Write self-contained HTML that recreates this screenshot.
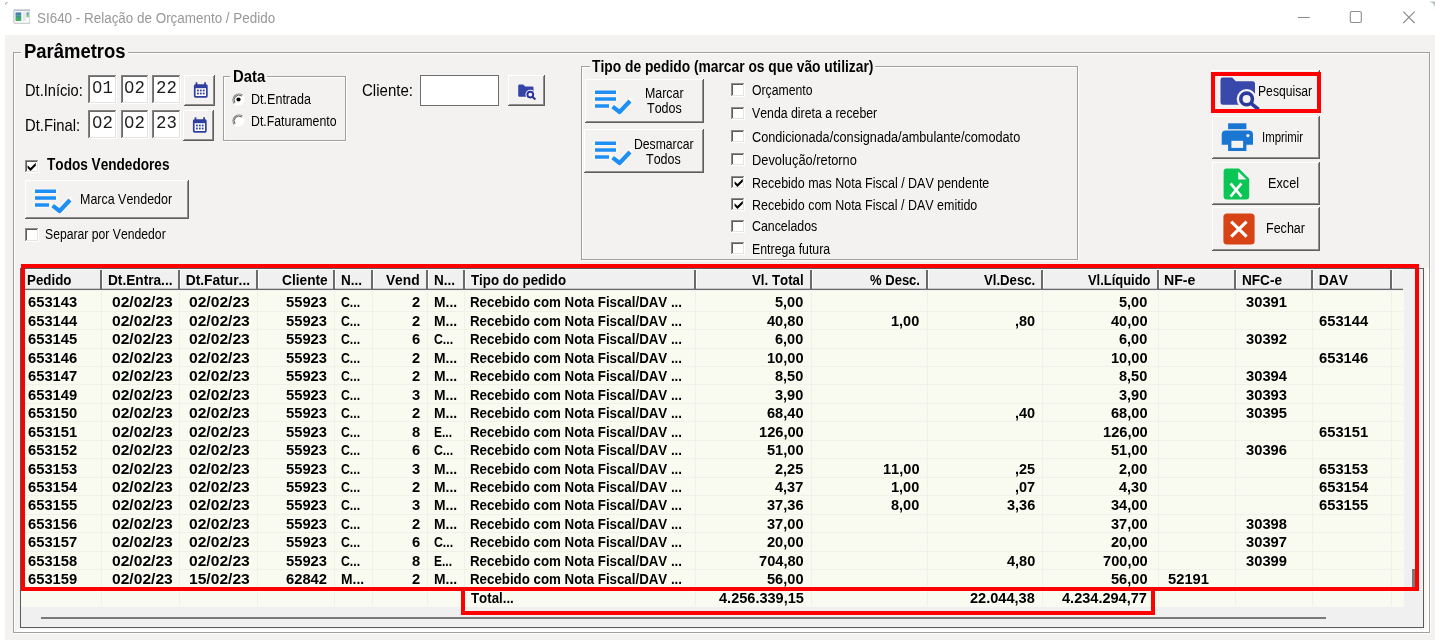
<!DOCTYPE html>
<html><head><meta charset="utf-8"><title>SI640</title>
<style>
html,body{margin:0;padding:0;background:#fff;}
body{width:1435px;height:640px;position:relative;overflow:hidden;font-family:"Liberation Sans",sans-serif;}
#r div,#r svg{position:absolute;}
#r{position:absolute;left:0;top:0;width:1435px;height:640px;overflow:hidden;will-change:transform;}
.t{white-space:pre;line-height:1;font-kerning:none;transform-origin:0 0;}
.b{font-weight:bold;}
.m{font-family:"Liberation Mono",monospace;}
</style></head><body><div id="r">
<div style="left:5.00px;top:35.00px;width:1430.00px;height:605.00px;background:#f3f2f1;"></div>
<svg style="left:12.7px;top:8.9px" width="17.8" height="15" viewBox="0 0 19 16" preserveAspectRatio="none"><rect x="0.9" y="1" width="17.2" height="14.2" rx="1" fill="#fcfcfd" stroke="#bcc1c9" stroke-width="1.1"/><rect x="0.9" y="0.8" width="17.2" height="1.4" fill="#bcc1c9"/><rect x="2.7" y="3.6" width="6.1" height="3.2" fill="#4683b0"/><rect x="2.7" y="6.6" width="6.1" height="3.2" fill="#3d9a88"/><rect x="2.7" y="9.6" width="6.1" height="3.2" fill="#43ad62"/><rect x="10.6" y="3.6" width="3" height="9.2" fill="#e6e6e6"/><rect x="14.4" y="3.5" width="2.5" height="2.8" fill="#6f98c6"/><rect x="14.4" y="6.2" width="2.5" height="2.7" fill="#7cc97e"/></svg>
<svg style="left:5px;top:2px" width="4" height="4" viewBox="0 0 4 4"><path d="M0.3 2.6Q0.4 0.5 2.6 0.3" stroke="#9a9a9a" stroke-width="0.9" fill="none"/></svg>
<svg style="left:1290px;top:5px" width="135" height="26" viewBox="0 0 135 26" fill="none" stroke="#8c8c8c" stroke-width="1.1"><path d="M8 12.5H19.8"/><rect x="60.3" y="6.5" width="11" height="11" rx="1.6"/><path d="M113.3 6.7L124.6 18M124.6 6.7L113.3 18"/></svg>
<svg style="left:1430px;top:1px" width="5" height="8" viewBox="0 0 5 8"><path d="M0 0.4H5V8C5 4 3.4 1.6 0 1Z" fill="#8a8f96" opacity="0.6"/></svg>
<div style="left:13.00px;top:52.00px;width:8.00px;height:1.00px;background:#a0a0a0;"></div>
<div style="left:127.50px;top:52.00px;width:1302.50px;height:1.00px;background:#a0a0a0;"></div>
<div style="left:13.00px;top:52.00px;width:1.00px;height:581.00px;background:#a0a0a0;"></div>
<div style="left:1429.00px;top:52.00px;width:1.00px;height:581.00px;background:#a0a0a0;"></div>
<div style="left:13.00px;top:632.00px;width:1417.00px;height:1.00px;background:#a0a0a0;"></div>
<div style="left:14.00px;top:53.00px;width:7.00px;height:1.00px;background:#ffffff;"></div>
<div style="left:127.50px;top:53.00px;width:1300.50px;height:1.00px;background:#ffffff;"></div>
<div style="left:14.00px;top:53.00px;width:1.00px;height:578.00px;background:#ffffff;"></div>
<div style="left:1430.00px;top:52.00px;width:1.00px;height:582.00px;background:#ffffff;"></div>
<div style="left:13.00px;top:633.00px;width:1417.00px;height:1.00px;background:#ffffff;"></div>
<div style="left:88.20px;top:75.00px;width:28.70px;height:29.30px;background:#ffffff;"></div>
<div style="left:88.20px;top:75.00px;width:28.70px;height:2.00px;background:#808080;"></div>
<div style="left:88.20px;top:75.00px;width:2.00px;height:29.30px;background:#808080;"></div>
<div style="left:89.20px;top:76.00px;width:26.70px;height:1.00px;background:#696969;"></div>
<div style="left:89.20px;top:76.00px;width:1.00px;height:27.30px;background:#696969;"></div>
<div style="left:115.90px;top:75.00px;width:1.00px;height:29.30px;background:#ffffff;"></div>
<div style="left:88.20px;top:103.30px;width:28.70px;height:1.00px;background:#ffffff;"></div>
<div style="left:114.90px;top:76.00px;width:1.00px;height:27.30px;background:#e3e3e3;"></div>
<div style="left:89.20px;top:102.30px;width:26.70px;height:1.00px;background:#e3e3e3;"></div>
<div style="left:120.60px;top:75.00px;width:28.70px;height:29.30px;background:#ffffff;"></div>
<div style="left:120.60px;top:75.00px;width:28.70px;height:2.00px;background:#808080;"></div>
<div style="left:120.60px;top:75.00px;width:2.00px;height:29.30px;background:#808080;"></div>
<div style="left:121.60px;top:76.00px;width:26.70px;height:1.00px;background:#696969;"></div>
<div style="left:121.60px;top:76.00px;width:1.00px;height:27.30px;background:#696969;"></div>
<div style="left:148.30px;top:75.00px;width:1.00px;height:29.30px;background:#ffffff;"></div>
<div style="left:120.60px;top:103.30px;width:28.70px;height:1.00px;background:#ffffff;"></div>
<div style="left:147.30px;top:76.00px;width:1.00px;height:27.30px;background:#e3e3e3;"></div>
<div style="left:121.60px;top:102.30px;width:26.70px;height:1.00px;background:#e3e3e3;"></div>
<div style="left:152.10px;top:75.00px;width:28.70px;height:29.30px;background:#ffffff;"></div>
<div style="left:152.10px;top:75.00px;width:28.70px;height:2.00px;background:#808080;"></div>
<div style="left:152.10px;top:75.00px;width:2.00px;height:29.30px;background:#808080;"></div>
<div style="left:153.10px;top:76.00px;width:26.70px;height:1.00px;background:#696969;"></div>
<div style="left:153.10px;top:76.00px;width:1.00px;height:27.30px;background:#696969;"></div>
<div style="left:179.80px;top:75.00px;width:1.00px;height:29.30px;background:#ffffff;"></div>
<div style="left:152.10px;top:103.30px;width:28.70px;height:1.00px;background:#ffffff;"></div>
<div style="left:178.80px;top:76.00px;width:1.00px;height:27.30px;background:#e3e3e3;"></div>
<div style="left:153.10px;top:102.30px;width:26.70px;height:1.00px;background:#e3e3e3;"></div>
<div style="left:88.20px;top:109.80px;width:28.70px;height:29.30px;background:#ffffff;"></div>
<div style="left:88.20px;top:109.80px;width:28.70px;height:2.00px;background:#808080;"></div>
<div style="left:88.20px;top:109.80px;width:2.00px;height:29.30px;background:#808080;"></div>
<div style="left:89.20px;top:110.80px;width:26.70px;height:1.00px;background:#696969;"></div>
<div style="left:89.20px;top:110.80px;width:1.00px;height:27.30px;background:#696969;"></div>
<div style="left:115.90px;top:109.80px;width:1.00px;height:29.30px;background:#ffffff;"></div>
<div style="left:88.20px;top:138.10px;width:28.70px;height:1.00px;background:#ffffff;"></div>
<div style="left:114.90px;top:110.80px;width:1.00px;height:27.30px;background:#e3e3e3;"></div>
<div style="left:89.20px;top:137.10px;width:26.70px;height:1.00px;background:#e3e3e3;"></div>
<div style="left:120.60px;top:109.80px;width:28.70px;height:29.30px;background:#ffffff;"></div>
<div style="left:120.60px;top:109.80px;width:28.70px;height:2.00px;background:#808080;"></div>
<div style="left:120.60px;top:109.80px;width:2.00px;height:29.30px;background:#808080;"></div>
<div style="left:121.60px;top:110.80px;width:26.70px;height:1.00px;background:#696969;"></div>
<div style="left:121.60px;top:110.80px;width:1.00px;height:27.30px;background:#696969;"></div>
<div style="left:148.30px;top:109.80px;width:1.00px;height:29.30px;background:#ffffff;"></div>
<div style="left:120.60px;top:138.10px;width:28.70px;height:1.00px;background:#ffffff;"></div>
<div style="left:147.30px;top:110.80px;width:1.00px;height:27.30px;background:#e3e3e3;"></div>
<div style="left:121.60px;top:137.10px;width:26.70px;height:1.00px;background:#e3e3e3;"></div>
<div style="left:152.10px;top:109.80px;width:28.70px;height:29.30px;background:#ffffff;"></div>
<div style="left:152.10px;top:109.80px;width:28.70px;height:2.00px;background:#808080;"></div>
<div style="left:152.10px;top:109.80px;width:2.00px;height:29.30px;background:#808080;"></div>
<div style="left:153.10px;top:110.80px;width:26.70px;height:1.00px;background:#696969;"></div>
<div style="left:153.10px;top:110.80px;width:1.00px;height:27.30px;background:#696969;"></div>
<div style="left:179.80px;top:109.80px;width:1.00px;height:29.30px;background:#ffffff;"></div>
<div style="left:152.10px;top:138.10px;width:28.70px;height:1.00px;background:#ffffff;"></div>
<div style="left:178.80px;top:110.80px;width:1.00px;height:27.30px;background:#e3e3e3;"></div>
<div style="left:153.10px;top:137.10px;width:26.70px;height:1.00px;background:#e3e3e3;"></div>
<div style="left:184.20px;top:75.00px;width:31.00px;height:31.20px;background:#f3f2f1;"></div>
<div style="left:184.20px;top:75.00px;width:30.00px;height:1.00px;background:#ffffff;"></div>
<div style="left:184.20px;top:75.00px;width:1.00px;height:30.20px;background:#ffffff;"></div>
<div style="left:213.20px;top:76.00px;width:1.00px;height:29.20px;background:#8e8e8e;"></div>
<div style="left:185.20px;top:104.20px;width:29.00px;height:1.00px;background:#8e8e8e;"></div>
<div style="left:214.20px;top:75.00px;width:1.00px;height:31.20px;background:#5e5e5e;"></div>
<div style="left:184.20px;top:105.20px;width:31.00px;height:1.00px;background:#5e5e5e;"></div>
<svg style="left:192.80px;top:82.00px" width="16" height="17" viewBox="0 0 16 17"><rect x="2.6" y="0.3" width="1.8" height="3" fill="#303f9f"/><rect x="11.2" y="0.3" width="1.8" height="3" fill="#303f9f"/><rect x="0.9" y="2.3" width="13.8" height="13.4" rx="1.6" fill="#303f9f"/><rect x="2.6" y="6.2" width="10.4" height="7.8" fill="#fff"/><g fill="#303f9f"><rect x="4" y="7.6" width="1.8" height="1.8"/><rect x="6.9" y="7.6" width="1.8" height="1.8"/><rect x="9.8" y="7.6" width="1.8" height="1.8"/><rect x="4" y="10.6" width="1.8" height="1.8"/><rect x="6.9" y="10.6" width="1.8" height="1.8"/><rect x="9.8" y="10.6" width="1.8" height="1.8"/></g></svg>
<div style="left:183.40px;top:109.80px;width:31.00px;height:31.40px;background:#f3f2f1;"></div>
<div style="left:183.40px;top:109.80px;width:30.00px;height:1.00px;background:#ffffff;"></div>
<div style="left:183.40px;top:109.80px;width:1.00px;height:30.40px;background:#ffffff;"></div>
<div style="left:212.40px;top:110.80px;width:1.00px;height:29.40px;background:#8e8e8e;"></div>
<div style="left:184.40px;top:139.20px;width:29.00px;height:1.00px;background:#8e8e8e;"></div>
<div style="left:213.40px;top:109.80px;width:1.00px;height:31.40px;background:#5e5e5e;"></div>
<div style="left:183.40px;top:140.20px;width:31.00px;height:1.00px;background:#5e5e5e;"></div>
<svg style="left:192.00px;top:116.90px" width="16" height="17" viewBox="0 0 16 17"><rect x="2.6" y="0.3" width="1.8" height="3" fill="#303f9f"/><rect x="11.2" y="0.3" width="1.8" height="3" fill="#303f9f"/><rect x="0.9" y="2.3" width="13.8" height="13.4" rx="1.6" fill="#303f9f"/><rect x="2.6" y="6.2" width="10.4" height="7.8" fill="#fff"/><g fill="#303f9f"><rect x="4" y="7.6" width="1.8" height="1.8"/><rect x="6.9" y="7.6" width="1.8" height="1.8"/><rect x="9.8" y="7.6" width="1.8" height="1.8"/><rect x="4" y="10.6" width="1.8" height="1.8"/><rect x="6.9" y="10.6" width="1.8" height="1.8"/><rect x="9.8" y="10.6" width="1.8" height="1.8"/></g></svg>
<div style="left:222.60px;top:76.10px;width:7.90px;height:1.00px;background:#a0a0a0;"></div>
<div style="left:267.00px;top:76.10px;width:78.80px;height:1.00px;background:#a0a0a0;"></div>
<div style="left:222.60px;top:76.10px;width:1.00px;height:64.80px;background:#a0a0a0;"></div>
<div style="left:344.80px;top:76.10px;width:1.00px;height:64.80px;background:#a0a0a0;"></div>
<div style="left:222.60px;top:139.90px;width:123.20px;height:1.00px;background:#a0a0a0;"></div>
<div style="left:223.60px;top:77.10px;width:6.90px;height:1.00px;background:#ffffff;"></div>
<div style="left:267.00px;top:77.10px;width:76.80px;height:1.00px;background:#ffffff;"></div>
<div style="left:223.60px;top:77.10px;width:1.00px;height:61.80px;background:#ffffff;"></div>
<div style="left:345.80px;top:76.10px;width:1.00px;height:65.80px;background:#ffffff;"></div>
<div style="left:222.60px;top:140.90px;width:123.20px;height:1.00px;background:#ffffff;"></div>
<svg style="left:231.70px;top:92.50px" width="13" height="13" viewBox="0 0 13 13"><circle cx="6.5" cy="6.5" r="5.6" fill="#fff"/><path d="M2.2 10.6A6 6 0 0 1 10.6 2.2" fill="none" stroke="#808080" stroke-width="1.1"/><path d="M3 9.8A4.9 4.9 0 0 1 9.8 3" fill="none" stroke="#555" stroke-width="1"/><path d="M10.8 2.4A6 6 0 0 1 2.4 10.8" fill="none" stroke="#fff" stroke-width="1.1"/><circle cx="6.5" cy="6.5" r="2.1" fill="#000"/></svg>
<svg style="left:231.70px;top:114.00px" width="13" height="13" viewBox="0 0 13 13"><circle cx="6.5" cy="6.5" r="5.6" fill="#fff"/><path d="M2.2 10.6A6 6 0 0 1 10.6 2.2" fill="none" stroke="#808080" stroke-width="1.1"/><path d="M3 9.8A4.9 4.9 0 0 1 9.8 3" fill="none" stroke="#555" stroke-width="1"/><path d="M10.8 2.4A6 6 0 0 1 2.4 10.8" fill="none" stroke="#fff" stroke-width="1.1"/></svg>
<div style="left:419.80px;top:75.00px;width:79.40px;height:31.00px;background:#6e6e6e;"></div>
<div style="left:420.90px;top:76.10px;width:77.20px;height:28.80px;background:#ffffff;"></div>
<div style="left:507.60px;top:75.00px;width:37.30px;height:31.00px;background:#f3f2f1;"></div>
<div style="left:507.60px;top:75.00px;width:36.30px;height:1.00px;background:#ffffff;"></div>
<div style="left:507.60px;top:75.00px;width:1.00px;height:30.00px;background:#ffffff;"></div>
<div style="left:542.90px;top:76.00px;width:1.00px;height:29.00px;background:#8e8e8e;"></div>
<div style="left:508.60px;top:104.00px;width:35.30px;height:1.00px;background:#8e8e8e;"></div>
<div style="left:543.90px;top:75.00px;width:1.00px;height:31.00px;background:#5e5e5e;"></div>
<div style="left:507.60px;top:105.00px;width:37.30px;height:1.00px;background:#5e5e5e;"></div>
<svg style="left:517px;top:84px" width="20" height="17" viewBox="0 0 20 17"><path d="M1.2 1.9Q1.2 0.6 2.5 0.6H6.3L8.1 2.4H15.2Q16.5 2.4 16.5 3.7V11.4Q16.5 12.7 15.2 12.7H2.5Q1.2 12.7 1.2 11.4Z" fill="#3443a8"/><circle cx="13.3" cy="10.6" r="4.9" fill="#f3f2f1"/><circle cx="13.3" cy="10.6" r="2.9" fill="none" stroke="#26349a" stroke-width="1.9"/><path d="M15.4 12.7L18.4 15.5" stroke="#26349a" stroke-width="2"/></svg>
<div style="left:25.00px;top:159.60px;width:13.60px;height:13.60px;background:#ffffff;"></div>
<div style="left:25.00px;top:159.60px;width:13.60px;height:1.00px;background:#8c8c8c;"></div>
<div style="left:25.00px;top:159.60px;width:1.00px;height:13.60px;background:#8c8c8c;"></div>
<div style="left:26.00px;top:160.60px;width:11.60px;height:1.00px;background:#5c5c5c;"></div>
<div style="left:26.00px;top:160.60px;width:1.00px;height:11.60px;background:#5c5c5c;"></div>
<div style="left:37.60px;top:159.60px;width:1.00px;height:13.60px;background:#ffffff;"></div>
<div style="left:25.00px;top:172.20px;width:13.60px;height:1.00px;background:#ffffff;"></div>
<div style="left:36.60px;top:160.60px;width:1.00px;height:11.60px;background:#e3e3e3;"></div>
<div style="left:26.00px;top:171.20px;width:11.60px;height:1.00px;background:#e3e3e3;"></div>
<svg style="left:27.40px;top:161.90px" width="9.6" height="9.8" viewBox="0 0 8 8"><path d="M0.5 2.6L2.9 5L7.3 0.6V3L2.9 7.4L0.5 5Z" fill="#000"/></svg>
<div style="left:25.00px;top:180.00px;width:163.80px;height:39.20px;background:#f3f2f1;"></div>
<div style="left:25.00px;top:180.00px;width:162.80px;height:1.00px;background:#ffffff;"></div>
<div style="left:25.00px;top:180.00px;width:1.00px;height:38.20px;background:#ffffff;"></div>
<div style="left:186.80px;top:181.00px;width:1.00px;height:37.20px;background:#8e8e8e;"></div>
<div style="left:26.00px;top:217.20px;width:161.80px;height:1.00px;background:#8e8e8e;"></div>
<div style="left:187.80px;top:180.00px;width:1.00px;height:39.20px;background:#5e5e5e;"></div>
<div style="left:25.00px;top:218.20px;width:163.80px;height:1.00px;background:#5e5e5e;"></div>
<svg style="left:32.00px;top:186.20px" width="44" height="31" viewBox="-3 -3 44 31"><g fill="none" stroke="#fdf7ee" stroke-linecap="round" stroke-linejoin="round"><path d="M0 2.2H21M0 9H21M0 16H14" stroke-width="5.4"/><path d="M17.6 16.6L24.6 22L35 11" stroke-width="6"/></g><g fill="none" stroke="#1e90f5"><path d="M0 2.2H21M0 9H21M0 16H14" stroke-width="3.6"/><path d="M17.6 16.6L24.6 22L35 11" stroke-width="4.2" stroke-linejoin="round"/></g></svg>
<div style="left:25.00px;top:228.00px;width:13.60px;height:13.60px;background:#ffffff;"></div>
<div style="left:25.00px;top:228.00px;width:13.60px;height:1.00px;background:#8c8c8c;"></div>
<div style="left:25.00px;top:228.00px;width:1.00px;height:13.60px;background:#8c8c8c;"></div>
<div style="left:26.00px;top:229.00px;width:11.60px;height:1.00px;background:#5c5c5c;"></div>
<div style="left:26.00px;top:229.00px;width:1.00px;height:11.60px;background:#5c5c5c;"></div>
<div style="left:37.60px;top:228.00px;width:1.00px;height:13.60px;background:#ffffff;"></div>
<div style="left:25.00px;top:240.60px;width:13.60px;height:1.00px;background:#ffffff;"></div>
<div style="left:36.60px;top:229.00px;width:1.00px;height:11.60px;background:#e3e3e3;"></div>
<div style="left:26.00px;top:239.60px;width:11.60px;height:1.00px;background:#e3e3e3;"></div>
<div style="left:581.00px;top:66.00px;width:9.00px;height:1.00px;background:#a0a0a0;"></div>
<div style="left:875.00px;top:66.00px;width:203.00px;height:1.00px;background:#a0a0a0;"></div>
<div style="left:581.00px;top:66.00px;width:1.00px;height:194.40px;background:#a0a0a0;"></div>
<div style="left:1077.00px;top:66.00px;width:1.00px;height:194.40px;background:#a0a0a0;"></div>
<div style="left:581.00px;top:259.40px;width:497.00px;height:1.00px;background:#a0a0a0;"></div>
<div style="left:582.00px;top:67.00px;width:8.00px;height:1.00px;background:#ffffff;"></div>
<div style="left:875.00px;top:67.00px;width:201.00px;height:1.00px;background:#ffffff;"></div>
<div style="left:582.00px;top:67.00px;width:1.00px;height:191.40px;background:#ffffff;"></div>
<div style="left:1078.00px;top:66.00px;width:1.00px;height:195.40px;background:#ffffff;"></div>
<div style="left:581.00px;top:260.40px;width:497.00px;height:1.00px;background:#ffffff;"></div>
<div style="left:584.60px;top:78.70px;width:119.00px;height:43.90px;background:#f3f2f1;"></div>
<div style="left:584.60px;top:78.70px;width:118.00px;height:1.00px;background:#ffffff;"></div>
<div style="left:584.60px;top:78.70px;width:1.00px;height:42.90px;background:#ffffff;"></div>
<div style="left:701.60px;top:79.70px;width:1.00px;height:41.90px;background:#8e8e8e;"></div>
<div style="left:585.60px;top:120.60px;width:117.00px;height:1.00px;background:#8e8e8e;"></div>
<div style="left:702.60px;top:78.70px;width:1.00px;height:43.90px;background:#5e5e5e;"></div>
<div style="left:584.60px;top:121.60px;width:119.00px;height:1.00px;background:#5e5e5e;"></div>
<svg style="left:591.60px;top:87.40px" width="44" height="31" viewBox="-3 -3 44 31"><g fill="none" stroke="#fdf7ee" stroke-linecap="round" stroke-linejoin="round"><path d="M0 2.2H21M0 9H21M0 16H14" stroke-width="5.4"/><path d="M17.6 16.6L24.6 22L35 11" stroke-width="6"/></g><g fill="none" stroke="#1e90f5"><path d="M0 2.2H21M0 9H21M0 16H14" stroke-width="3.6"/><path d="M17.6 16.6L24.6 22L35 11" stroke-width="4.2" stroke-linejoin="round"/></g></svg>
<div style="left:584.40px;top:129.40px;width:119.20px;height:43.90px;background:#f3f2f1;"></div>
<div style="left:584.40px;top:129.40px;width:118.20px;height:1.00px;background:#ffffff;"></div>
<div style="left:584.40px;top:129.40px;width:1.00px;height:42.90px;background:#ffffff;"></div>
<div style="left:701.60px;top:130.40px;width:1.00px;height:41.90px;background:#8e8e8e;"></div>
<div style="left:585.40px;top:171.30px;width:117.20px;height:1.00px;background:#8e8e8e;"></div>
<div style="left:702.60px;top:129.40px;width:1.00px;height:43.90px;background:#5e5e5e;"></div>
<div style="left:584.40px;top:172.30px;width:119.20px;height:1.00px;background:#5e5e5e;"></div>
<svg style="left:591.60px;top:138.00px" width="44" height="31" viewBox="-3 -3 44 31"><g fill="none" stroke="#fdf7ee" stroke-linecap="round" stroke-linejoin="round"><path d="M0 2.2H21M0 9H21M0 16H14" stroke-width="5.4"/><path d="M17.6 16.6L24.6 22L35 11" stroke-width="6"/></g><g fill="none" stroke="#1e90f5"><path d="M0 2.2H21M0 9H21M0 16H14" stroke-width="3.6"/><path d="M17.6 16.6L24.6 22L35 11" stroke-width="4.2" stroke-linejoin="round"/></g></svg>
<div style="left:731.40px;top:83.00px;width:13.60px;height:13.60px;background:#ffffff;"></div>
<div style="left:731.40px;top:83.00px;width:13.60px;height:1.00px;background:#8c8c8c;"></div>
<div style="left:731.40px;top:83.00px;width:1.00px;height:13.60px;background:#8c8c8c;"></div>
<div style="left:732.40px;top:84.00px;width:11.60px;height:1.00px;background:#5c5c5c;"></div>
<div style="left:732.40px;top:84.00px;width:1.00px;height:11.60px;background:#5c5c5c;"></div>
<div style="left:744.00px;top:83.00px;width:1.00px;height:13.60px;background:#ffffff;"></div>
<div style="left:731.40px;top:95.60px;width:13.60px;height:1.00px;background:#ffffff;"></div>
<div style="left:743.00px;top:84.00px;width:1.00px;height:11.60px;background:#e3e3e3;"></div>
<div style="left:732.40px;top:94.60px;width:11.60px;height:1.00px;background:#e3e3e3;"></div>
<div style="left:731.40px;top:106.60px;width:13.60px;height:13.60px;background:#ffffff;"></div>
<div style="left:731.40px;top:106.60px;width:13.60px;height:1.00px;background:#8c8c8c;"></div>
<div style="left:731.40px;top:106.60px;width:1.00px;height:13.60px;background:#8c8c8c;"></div>
<div style="left:732.40px;top:107.60px;width:11.60px;height:1.00px;background:#5c5c5c;"></div>
<div style="left:732.40px;top:107.60px;width:1.00px;height:11.60px;background:#5c5c5c;"></div>
<div style="left:744.00px;top:106.60px;width:1.00px;height:13.60px;background:#ffffff;"></div>
<div style="left:731.40px;top:119.20px;width:13.60px;height:1.00px;background:#ffffff;"></div>
<div style="left:743.00px;top:107.60px;width:1.00px;height:11.60px;background:#e3e3e3;"></div>
<div style="left:732.40px;top:118.20px;width:11.60px;height:1.00px;background:#e3e3e3;"></div>
<div style="left:731.40px;top:129.80px;width:13.60px;height:13.60px;background:#ffffff;"></div>
<div style="left:731.40px;top:129.80px;width:13.60px;height:1.00px;background:#8c8c8c;"></div>
<div style="left:731.40px;top:129.80px;width:1.00px;height:13.60px;background:#8c8c8c;"></div>
<div style="left:732.40px;top:130.80px;width:11.60px;height:1.00px;background:#5c5c5c;"></div>
<div style="left:732.40px;top:130.80px;width:1.00px;height:11.60px;background:#5c5c5c;"></div>
<div style="left:744.00px;top:129.80px;width:1.00px;height:13.60px;background:#ffffff;"></div>
<div style="left:731.40px;top:142.40px;width:13.60px;height:1.00px;background:#ffffff;"></div>
<div style="left:743.00px;top:130.80px;width:1.00px;height:11.60px;background:#e3e3e3;"></div>
<div style="left:732.40px;top:141.40px;width:11.60px;height:1.00px;background:#e3e3e3;"></div>
<div style="left:731.40px;top:152.80px;width:13.60px;height:13.60px;background:#ffffff;"></div>
<div style="left:731.40px;top:152.80px;width:13.60px;height:1.00px;background:#8c8c8c;"></div>
<div style="left:731.40px;top:152.80px;width:1.00px;height:13.60px;background:#8c8c8c;"></div>
<div style="left:732.40px;top:153.80px;width:11.60px;height:1.00px;background:#5c5c5c;"></div>
<div style="left:732.40px;top:153.80px;width:1.00px;height:11.60px;background:#5c5c5c;"></div>
<div style="left:744.00px;top:152.80px;width:1.00px;height:13.60px;background:#ffffff;"></div>
<div style="left:731.40px;top:165.40px;width:13.60px;height:1.00px;background:#ffffff;"></div>
<div style="left:743.00px;top:153.80px;width:1.00px;height:11.60px;background:#e3e3e3;"></div>
<div style="left:732.40px;top:164.40px;width:11.60px;height:1.00px;background:#e3e3e3;"></div>
<div style="left:731.40px;top:175.80px;width:13.60px;height:13.60px;background:#ffffff;"></div>
<div style="left:731.40px;top:175.80px;width:13.60px;height:1.00px;background:#8c8c8c;"></div>
<div style="left:731.40px;top:175.80px;width:1.00px;height:13.60px;background:#8c8c8c;"></div>
<div style="left:732.40px;top:176.80px;width:11.60px;height:1.00px;background:#5c5c5c;"></div>
<div style="left:732.40px;top:176.80px;width:1.00px;height:11.60px;background:#5c5c5c;"></div>
<div style="left:744.00px;top:175.80px;width:1.00px;height:13.60px;background:#ffffff;"></div>
<div style="left:731.40px;top:188.40px;width:13.60px;height:1.00px;background:#ffffff;"></div>
<div style="left:743.00px;top:176.80px;width:1.00px;height:11.60px;background:#e3e3e3;"></div>
<div style="left:732.40px;top:187.40px;width:11.60px;height:1.00px;background:#e3e3e3;"></div>
<svg style="left:733.80px;top:178.10px" width="9.6" height="9.8" viewBox="0 0 8 8"><path d="M0.5 2.6L2.9 5L7.3 0.6V3L2.9 7.4L0.5 5Z" fill="#000"/></svg>
<div style="left:731.40px;top:197.80px;width:13.60px;height:13.60px;background:#ffffff;"></div>
<div style="left:731.40px;top:197.80px;width:13.60px;height:1.00px;background:#8c8c8c;"></div>
<div style="left:731.40px;top:197.80px;width:1.00px;height:13.60px;background:#8c8c8c;"></div>
<div style="left:732.40px;top:198.80px;width:11.60px;height:1.00px;background:#5c5c5c;"></div>
<div style="left:732.40px;top:198.80px;width:1.00px;height:11.60px;background:#5c5c5c;"></div>
<div style="left:744.00px;top:197.80px;width:1.00px;height:13.60px;background:#ffffff;"></div>
<div style="left:731.40px;top:210.40px;width:13.60px;height:1.00px;background:#ffffff;"></div>
<div style="left:743.00px;top:198.80px;width:1.00px;height:11.60px;background:#e3e3e3;"></div>
<div style="left:732.40px;top:209.40px;width:11.60px;height:1.00px;background:#e3e3e3;"></div>
<svg style="left:733.80px;top:200.10px" width="9.6" height="9.8" viewBox="0 0 8 8"><path d="M0.5 2.6L2.9 5L7.3 0.6V3L2.9 7.4L0.5 5Z" fill="#000"/></svg>
<div style="left:731.40px;top:219.60px;width:13.60px;height:13.60px;background:#ffffff;"></div>
<div style="left:731.40px;top:219.60px;width:13.60px;height:1.00px;background:#8c8c8c;"></div>
<div style="left:731.40px;top:219.60px;width:1.00px;height:13.60px;background:#8c8c8c;"></div>
<div style="left:732.40px;top:220.60px;width:11.60px;height:1.00px;background:#5c5c5c;"></div>
<div style="left:732.40px;top:220.60px;width:1.00px;height:11.60px;background:#5c5c5c;"></div>
<div style="left:744.00px;top:219.60px;width:1.00px;height:13.60px;background:#ffffff;"></div>
<div style="left:731.40px;top:232.20px;width:13.60px;height:1.00px;background:#ffffff;"></div>
<div style="left:743.00px;top:220.60px;width:1.00px;height:11.60px;background:#e3e3e3;"></div>
<div style="left:732.40px;top:231.20px;width:11.60px;height:1.00px;background:#e3e3e3;"></div>
<div style="left:731.40px;top:241.80px;width:13.60px;height:13.60px;background:#ffffff;"></div>
<div style="left:731.40px;top:241.80px;width:13.60px;height:1.00px;background:#8c8c8c;"></div>
<div style="left:731.40px;top:241.80px;width:1.00px;height:13.60px;background:#8c8c8c;"></div>
<div style="left:732.40px;top:242.80px;width:11.60px;height:1.00px;background:#5c5c5c;"></div>
<div style="left:732.40px;top:242.80px;width:1.00px;height:11.60px;background:#5c5c5c;"></div>
<div style="left:744.00px;top:241.80px;width:1.00px;height:13.60px;background:#ffffff;"></div>
<div style="left:731.40px;top:254.40px;width:13.60px;height:1.00px;background:#ffffff;"></div>
<div style="left:743.00px;top:242.80px;width:1.00px;height:11.60px;background:#e3e3e3;"></div>
<div style="left:732.40px;top:253.40px;width:11.60px;height:1.00px;background:#e3e3e3;"></div>
<div style="left:1212.00px;top:70.00px;width:108.00px;height:42.80px;background:#f3f2f1;"></div>
<div style="left:1212.00px;top:70.00px;width:107.00px;height:1.00px;background:#ffffff;"></div>
<div style="left:1212.00px;top:70.00px;width:1.00px;height:41.80px;background:#ffffff;"></div>
<div style="left:1318.00px;top:71.00px;width:1.00px;height:40.80px;background:#8e8e8e;"></div>
<div style="left:1213.00px;top:110.80px;width:106.00px;height:1.00px;background:#8e8e8e;"></div>
<div style="left:1319.00px;top:70.00px;width:1.00px;height:42.80px;background:#5e5e5e;"></div>
<div style="left:1212.00px;top:111.80px;width:108.00px;height:1.00px;background:#5e5e5e;"></div>
<div style="left:1211.70px;top:115.60px;width:108.30px;height:43.60px;background:#f3f2f1;"></div>
<div style="left:1211.70px;top:115.60px;width:107.30px;height:1.00px;background:#ffffff;"></div>
<div style="left:1211.70px;top:115.60px;width:1.00px;height:42.60px;background:#ffffff;"></div>
<div style="left:1318.00px;top:116.60px;width:1.00px;height:41.60px;background:#8e8e8e;"></div>
<div style="left:1212.70px;top:157.20px;width:106.30px;height:1.00px;background:#8e8e8e;"></div>
<div style="left:1319.00px;top:115.60px;width:1.00px;height:43.60px;background:#5e5e5e;"></div>
<div style="left:1211.70px;top:158.20px;width:108.30px;height:1.00px;background:#5e5e5e;"></div>
<div style="left:1212.00px;top:161.60px;width:108.00px;height:43.60px;background:#f3f2f1;"></div>
<div style="left:1212.00px;top:161.60px;width:107.00px;height:1.00px;background:#ffffff;"></div>
<div style="left:1212.00px;top:161.60px;width:1.00px;height:42.60px;background:#ffffff;"></div>
<div style="left:1318.00px;top:162.60px;width:1.00px;height:41.60px;background:#8e8e8e;"></div>
<div style="left:1213.00px;top:203.20px;width:106.00px;height:1.00px;background:#8e8e8e;"></div>
<div style="left:1319.00px;top:161.60px;width:1.00px;height:43.60px;background:#5e5e5e;"></div>
<div style="left:1212.00px;top:204.20px;width:108.00px;height:1.00px;background:#5e5e5e;"></div>
<div style="left:1212.00px;top:207.00px;width:108.00px;height:43.60px;background:#f3f2f1;"></div>
<div style="left:1212.00px;top:207.00px;width:107.00px;height:1.00px;background:#ffffff;"></div>
<div style="left:1212.00px;top:207.00px;width:1.00px;height:42.60px;background:#ffffff;"></div>
<div style="left:1318.00px;top:208.00px;width:1.00px;height:41.60px;background:#8e8e8e;"></div>
<div style="left:1213.00px;top:248.60px;width:106.00px;height:1.00px;background:#8e8e8e;"></div>
<div style="left:1319.00px;top:207.00px;width:1.00px;height:43.60px;background:#5e5e5e;"></div>
<div style="left:1212.00px;top:249.60px;width:108.00px;height:1.00px;background:#5e5e5e;"></div>
<svg style="left:1219.5px;top:76.5px" width="40" height="33" viewBox="0 0 40 33"><path d="M0.5 3Q0.5 0.6 2.9 0.6H12.2L15.8 4.2H32.4Q35 4.2 35 6.8V25.2Q35 27.8 32.4 27.8H2.9Q0.5 27.8 0.5 25.4Z" fill="#3949ab"/><circle cx="26.6" cy="21.9" r="9.9" fill="#f3f2f1"/><circle cx="26.6" cy="21.9" r="5.8" fill="none" stroke="#2c3a9c" stroke-width="3.6"/><path d="M31 26.4L38.6 32.4" stroke="#2c3a9c" stroke-width="3.7"/></svg>
<svg style="left:1220.5px;top:122px" width="33" height="30" viewBox="0 0 33 30"><rect x="7.1" y="1.3" width="18.3" height="5.9" fill="#1976d2"/><path d="M0.7 12.6Q0.7 8.5 4.8 8.5H27.9Q32 8.5 32 12.6V22.7H25.4V29.1H7.1V22.7H0.7Z" fill="#1976d2"/><rect x="10.4" y="18.8" width="11.7" height="7.1" fill="#f8f4ee"/><circle cx="26.9" cy="13.6" r="1.6" fill="#f8f4ee"/></svg>
<svg style="left:1223.0px;top:168.0px" width="27" height="32" viewBox="0 0 27 32"><path d="M0.6 3.6Q0.6 0.6 3.6 0.6H16L26.2 10.8V28.4Q26.2 31.4 23.2 31.4H3.6Q0.6 31.4 0.6 28.4Z" fill="#0ac755"/><path d="M15.2 3.4L23.4 11.6H15.2Z" fill="#f4eff3"/><path d="M7.6 15.4L18.4 28.6M18.4 15.4L7.6 28.6" stroke="#fff" stroke-width="2.6" fill="none"/></svg>
<svg style="left:1223px;top:213.1px" width="32" height="32" viewBox="0 0 32 32"><rect x="0.4" y="0.4" width="31.2" height="31.2" rx="3.6" fill="#d84315"/><path d="M8.2 8.6L23.6 23.6M23.6 8.6L8.2 23.6" stroke="#fff" stroke-width="3.1" fill="none"/></svg>
<div style="left:20.00px;top:268.00px;width:1404.40px;height:360.40px;background:#f0f0f0;"></div>
<div style="left:20.00px;top:268.00px;width:1404.40px;height:1.00px;background:#5a5a5a;"></div>
<div style="left:20.00px;top:268.00px;width:1.20px;height:360.40px;background:#5a5a5a;"></div>
<div style="left:1423.10px;top:268.00px;width:1.30px;height:360.40px;background:#5a5a5a;"></div>
<div style="left:20.00px;top:627.00px;width:1404.40px;height:1.40px;background:#5a5a5a;"></div>
<div style="left:1424.40px;top:268.00px;width:3.00px;height:362.00px;background:#f7f7f6;"></div>
<div style="left:1427.40px;top:268.00px;width:1.20px;height:363.00px;background:#ffffff;"></div>
<div style="left:18.00px;top:628.40px;width:1409.00px;height:2.20px;background:#f7f7f6;"></div>
<div style="left:16.00px;top:630.40px;width:1412.50px;height:1.20px;background:#ffffff;"></div>
<div style="left:21.20px;top:290.50px;width:1381.80px;height:315.90px;background:#fafbf0;"></div>
<div style="left:21.20px;top:606.40px;width:1382.80px;height:1.00px;background:#f8f8f6;"></div>
<div style="left:1403.00px;top:290.50px;width:1.00px;height:316.90px;background:#f8f8f6;"></div>
<div style="left:21.20px;top:310.60px;width:1381.80px;height:1.00px;background:#f0f1e9;"></div>
<div style="left:21.20px;top:329.07px;width:1381.80px;height:1.00px;background:#f0f1e9;"></div>
<div style="left:21.20px;top:347.54px;width:1381.80px;height:1.00px;background:#f0f1e9;"></div>
<div style="left:21.20px;top:366.01px;width:1381.80px;height:1.00px;background:#f0f1e9;"></div>
<div style="left:21.20px;top:384.48px;width:1381.80px;height:1.00px;background:#f0f1e9;"></div>
<div style="left:21.20px;top:402.95px;width:1381.80px;height:1.00px;background:#f0f1e9;"></div>
<div style="left:21.20px;top:421.42px;width:1381.80px;height:1.00px;background:#f0f1e9;"></div>
<div style="left:21.20px;top:439.89px;width:1381.80px;height:1.00px;background:#f0f1e9;"></div>
<div style="left:21.20px;top:458.36px;width:1381.80px;height:1.00px;background:#f0f1e9;"></div>
<div style="left:21.20px;top:476.83px;width:1381.80px;height:1.00px;background:#f0f1e9;"></div>
<div style="left:21.20px;top:495.30px;width:1381.80px;height:1.00px;background:#f0f1e9;"></div>
<div style="left:21.20px;top:513.77px;width:1381.80px;height:1.00px;background:#f0f1e9;"></div>
<div style="left:21.20px;top:532.24px;width:1381.80px;height:1.00px;background:#f0f1e9;"></div>
<div style="left:21.20px;top:550.71px;width:1381.80px;height:1.00px;background:#f0f1e9;"></div>
<div style="left:21.20px;top:569.18px;width:1381.80px;height:1.00px;background:#f0f1e9;"></div>
<div style="left:21.20px;top:587.65px;width:1381.80px;height:1.00px;background:#f0f1e9;"></div>
<div style="left:101.20px;top:290.50px;width:1.00px;height:315.90px;background:#f0f1e9;"></div>
<div style="left:178.70px;top:290.50px;width:1.00px;height:315.90px;background:#f0f1e9;"></div>
<div style="left:256.70px;top:290.50px;width:1.00px;height:315.90px;background:#f0f1e9;"></div>
<div style="left:334.20px;top:290.50px;width:1.00px;height:315.90px;background:#f0f1e9;"></div>
<div style="left:372.20px;top:290.50px;width:1.00px;height:315.90px;background:#f0f1e9;"></div>
<div style="left:426.80px;top:290.50px;width:1.00px;height:315.90px;background:#f0f1e9;"></div>
<div style="left:463.70px;top:290.50px;width:1.00px;height:315.90px;background:#f0f1e9;"></div>
<div style="left:694.80px;top:290.50px;width:1.00px;height:315.90px;background:#f0f1e9;"></div>
<div style="left:810.70px;top:290.50px;width:1.00px;height:315.90px;background:#f0f1e9;"></div>
<div style="left:926.60px;top:290.50px;width:1.00px;height:315.90px;background:#f0f1e9;"></div>
<div style="left:1042.00px;top:290.50px;width:1.00px;height:315.90px;background:#f0f1e9;"></div>
<div style="left:1157.60px;top:290.50px;width:1.00px;height:315.90px;background:#f0f1e9;"></div>
<div style="left:1234.80px;top:290.50px;width:1.00px;height:315.90px;background:#f0f1e9;"></div>
<div style="left:1312.20px;top:290.50px;width:1.00px;height:315.90px;background:#f0f1e9;"></div>
<div style="left:1390.60px;top:290.50px;width:1.00px;height:315.90px;background:#f0f1e9;"></div>
<div style="left:21.20px;top:269.00px;width:1381.80px;height:21.50px;background:#f0f0f0;"></div>
<div style="left:21.20px;top:288.30px;width:1381.80px;height:2.10px;background:#6a6a6a;"></div>
<div style="left:21.20px;top:287.50px;width:1381.80px;height:0.80px;background:#c8c8c8;"></div>
<div style="left:100.40px;top:269.50px;width:1.80px;height:20.50px;background:#6a6a6a;"></div>
<div style="left:102.20px;top:269.50px;width:1.20px;height:18.70px;background:#ffffff;"></div>
<div style="left:177.90px;top:269.50px;width:1.80px;height:20.50px;background:#6a6a6a;"></div>
<div style="left:179.70px;top:269.50px;width:1.20px;height:18.70px;background:#ffffff;"></div>
<div style="left:255.90px;top:269.50px;width:1.80px;height:20.50px;background:#6a6a6a;"></div>
<div style="left:257.70px;top:269.50px;width:1.20px;height:18.70px;background:#ffffff;"></div>
<div style="left:333.40px;top:269.50px;width:1.80px;height:20.50px;background:#6a6a6a;"></div>
<div style="left:335.20px;top:269.50px;width:1.20px;height:18.70px;background:#ffffff;"></div>
<div style="left:371.40px;top:269.50px;width:1.80px;height:20.50px;background:#6a6a6a;"></div>
<div style="left:373.20px;top:269.50px;width:1.20px;height:18.70px;background:#ffffff;"></div>
<div style="left:426.00px;top:269.50px;width:1.80px;height:20.50px;background:#6a6a6a;"></div>
<div style="left:427.80px;top:269.50px;width:1.20px;height:18.70px;background:#ffffff;"></div>
<div style="left:462.90px;top:269.50px;width:1.80px;height:20.50px;background:#6a6a6a;"></div>
<div style="left:464.70px;top:269.50px;width:1.20px;height:18.70px;background:#ffffff;"></div>
<div style="left:694.00px;top:269.50px;width:1.80px;height:20.50px;background:#6a6a6a;"></div>
<div style="left:695.80px;top:269.50px;width:1.20px;height:18.70px;background:#ffffff;"></div>
<div style="left:809.90px;top:269.50px;width:1.80px;height:20.50px;background:#6a6a6a;"></div>
<div style="left:811.70px;top:269.50px;width:1.20px;height:18.70px;background:#ffffff;"></div>
<div style="left:925.80px;top:269.50px;width:1.80px;height:20.50px;background:#6a6a6a;"></div>
<div style="left:927.60px;top:269.50px;width:1.20px;height:18.70px;background:#ffffff;"></div>
<div style="left:1041.20px;top:269.50px;width:1.80px;height:20.50px;background:#6a6a6a;"></div>
<div style="left:1043.00px;top:269.50px;width:1.20px;height:18.70px;background:#ffffff;"></div>
<div style="left:1156.80px;top:269.50px;width:1.80px;height:20.50px;background:#6a6a6a;"></div>
<div style="left:1158.60px;top:269.50px;width:1.20px;height:18.70px;background:#ffffff;"></div>
<div style="left:1234.00px;top:269.50px;width:1.80px;height:20.50px;background:#6a6a6a;"></div>
<div style="left:1235.80px;top:269.50px;width:1.20px;height:18.70px;background:#ffffff;"></div>
<div style="left:1311.40px;top:269.50px;width:1.80px;height:20.50px;background:#6a6a6a;"></div>
<div style="left:1313.20px;top:269.50px;width:1.20px;height:18.70px;background:#ffffff;"></div>
<div style="left:1389.80px;top:269.50px;width:1.80px;height:20.50px;background:#6a6a6a;"></div>
<div style="left:1391.60px;top:269.50px;width:1.20px;height:18.70px;background:#ffffff;"></div>
<div style="left:21.20px;top:269.00px;width:1381.80px;height:1.00px;background:#fdfdfd;"></div>
<div style="left:41.00px;top:616.50px;width:1284.80px;height:2.10px;background:#7a7a7a;"></div>
<div style="left:1412.30px;top:568.50px;width:2.30px;height:19.00px;background:#7a7a7a;"></div>
<div class="t" style="left:37.40px;top:11.05px;font-size:14px;color:#989898;transform:scaleX(0.9591);">SI640 - Relação de Orçamento / Pedido</div>
<div class="t b" style="left:23.50px;top:41.99px;font-size:19.5px;transform:scaleX(0.9468);">Parâmetros</div>
<div class="t" style="left:24.70px;top:82.12px;font-size:16.4px;transform:scaleX(0.8935);">Dt.Início:</div>
<div class="t" style="left:24.70px;top:116.72px;font-size:16.4px;transform:scaleX(0.9045);">Dt.Final:</div>
<div class="t m" style="left:92.00px;top:80.11px;font-size:17.6px;color:#1c1c1c;transform:scaleX(0.9893);">01</div>
<div class="t m" style="left:124.40px;top:80.11px;font-size:17.6px;color:#1c1c1c;transform:scaleX(0.9893);">02</div>
<div class="t m" style="left:155.90px;top:80.11px;font-size:17.6px;color:#1c1c1c;transform:scaleX(0.9893);">22</div>
<div class="t m" style="left:92.00px;top:114.91px;font-size:17.6px;color:#1c1c1c;transform:scaleX(0.9893);">02</div>
<div class="t m" style="left:124.40px;top:114.91px;font-size:17.6px;color:#1c1c1c;transform:scaleX(0.9893);">02</div>
<div class="t m" style="left:155.90px;top:114.91px;font-size:17.6px;color:#1c1c1c;transform:scaleX(0.9893);">23</div>
<div class="t b" style="left:232.80px;top:68.79px;font-size:15.6px;transform:scaleX(0.9523);">Data</div>
<div class="t" style="left:251.10px;top:91.13px;font-size:15.2px;transform:scaleX(0.8263);">Dt.Entrada</div>
<div class="t" style="left:251.10px;top:112.73px;font-size:15.2px;transform:scaleX(0.8113);">Dt.Faturamento</div>
<div class="t" style="left:362.10px;top:82.32px;font-size:16.4px;transform:scaleX(0.9176);">Cliente:</div>
<div class="t b" style="left:47.30px;top:157.39px;font-size:15.6px;transform:scaleX(0.8727);">Todos Vendedores</div>
<div class="t" style="left:80.30px;top:192.11px;font-size:14.4px;transform:scaleX(0.8656);">Marca Vendedor</div>
<div class="t" style="left:45.40px;top:225.73px;font-size:15.2px;transform:scaleX(0.8031);">Separar por Vendedor</div>
<div class="t b" style="left:592.20px;top:58.59px;font-size:15.6px;transform:scaleX(0.8849);">Tipo de pedido (marcar os que vão utilizar)</div>
<div class="t" style="left:644.80px;top:85.91px;font-size:14.4px;transform:scaleX(0.8620);">Marcar</div>
<div class="t" style="left:646.50px;top:101.11px;font-size:14.4px;transform:scaleX(0.8700);">Todos</div>
<div class="t" style="left:633.90px;top:137.11px;font-size:14.4px;transform:scaleX(0.8469);">Desmarcar</div>
<div class="t" style="left:646.40px;top:152.01px;font-size:14.4px;transform:scaleX(0.8675);">Todos</div>
<div class="t" style="left:752.20px;top:81.73px;font-size:15.2px;transform:scaleX(0.8053);">Orçamento</div>
<div class="t" style="left:752.20px;top:105.33px;font-size:15.2px;transform:scaleX(0.8103);">Venda direta a receber</div>
<div class="t" style="left:752.20px;top:128.53px;font-size:15.2px;transform:scaleX(0.8359);">Condicionada/consignada/ambulante/comodato</div>
<div class="t" style="left:752.20px;top:151.53px;font-size:15.2px;transform:scaleX(0.8452);">Devolução/retorno</div>
<div class="t" style="left:752.20px;top:174.53px;font-size:15.2px;transform:scaleX(0.8219);">Recebido mas Nota Fiscal / DAV pendente</div>
<div class="t" style="left:752.20px;top:196.53px;font-size:15.2px;transform:scaleX(0.8213);">Recebido com Nota Fiscal / DAV emitido</div>
<div class="t" style="left:752.20px;top:218.33px;font-size:15.2px;transform:scaleX(0.8140);">Cancelados</div>
<div class="t" style="left:752.20px;top:240.53px;font-size:15.2px;transform:scaleX(0.8125);">Entrega futura</div>
<div class="t" style="left:1257.80px;top:83.75px;font-size:14px;transform:scaleX(0.8689);">Pesquisar</div>
<div class="t" style="left:1261.80px;top:130.05px;font-size:14px;transform:scaleX(0.8131);">Imprimir</div>
<div class="t" style="left:1267.90px;top:175.95px;font-size:14px;transform:scaleX(0.9055);">Excel</div>
<div class="t" style="left:1265.50px;top:220.75px;font-size:14px;transform:scaleX(0.8949);">Fechar</div>
<div class="t b" style="left:27.00px;top:273.62px;font-size:13.8px;transform:scaleX(0.9674);">Pedido</div>
<div class="t b" style="left:107.90px;top:273.62px;font-size:13.8px;transform:scaleX(0.9897);">Dt.Entra...</div>
<div class="t b" style="left:185.70px;top:273.62px;font-size:13.8px;">Dt.Fatur...</div>
<div class="t b" style="left:281.70px;top:273.62px;font-size:13.8px;transform:scaleX(0.9935);">Cliente</div>
<div class="t b" style="left:340.80px;top:273.62px;font-size:13.8px;transform:scaleX(0.9828);">N...</div>
<div class="t b" style="left:385.90px;top:273.62px;font-size:13.8px;">Vend</div>
<div class="t b" style="left:433.60px;top:273.62px;font-size:13.8px;transform:scaleX(0.9828);">N...</div>
<div class="t b" style="left:470.50px;top:273.62px;font-size:13.8px;transform:scaleX(0.9610);">Tipo do pedido</div>
<div class="t b" style="left:751.80px;top:273.62px;font-size:13.8px;transform:scaleX(0.9633);">Vl. Total</div>
<div class="t b" style="left:869.50px;top:273.62px;font-size:13.8px;transform:scaleX(0.9448);">% Desc.</div>
<div class="t b" style="left:984.30px;top:273.62px;font-size:13.8px;transform:scaleX(0.9537);">Vl.Desc.</div>
<div class="t b" style="left:1088.00px;top:273.62px;font-size:13.8px;transform:scaleX(0.9372);">Vl.Líquido</div>
<div class="t b" style="left:1164.10px;top:273.62px;font-size:13.8px;transform:scaleX(1.0237);">NF-e</div>
<div class="t b" style="left:1241.50px;top:273.62px;font-size:13.8px;transform:scaleX(0.9846);">NFC-e</div>
<div class="t b" style="left:1318.80px;top:273.62px;font-size:13.8px;">DAV</div>
<div class="t b" style="left:28.10px;top:296.32px;font-size:13.8px;transform:scaleX(1.0685);">653143</div>
<div class="t b" style="left:111.60px;top:296.32px;font-size:13.8px;transform:scaleX(1.1318);">02/02/23</div>
<div class="t b" style="left:189.10px;top:296.32px;font-size:13.8px;transform:scaleX(1.1318);">02/02/23</div>
<div class="t b" style="left:286.40px;top:296.32px;font-size:13.8px;transform:scaleX(1.0684);">55923</div>
<div class="t b" style="left:340.80px;top:296.32px;font-size:13.8px;transform:scaleX(0.8897);">C...</div>
<div class="t b" style="left:411.50px;top:296.32px;font-size:13.8px;transform:scaleX(1.0667);">2</div>
<div class="t b" style="left:433.60px;top:296.32px;font-size:13.8px;transform:scaleX(1.0043);">M...</div>
<div class="t b" style="left:470.30px;top:296.32px;font-size:13.8px;transform:scaleX(0.9634);">Recebido com Nota Fiscal/DAV ...</div>
<div class="t b" style="left:775.30px;top:296.32px;font-size:13.8px;transform:scaleX(1.0536);">5,00</div>
<div class="t b" style="left:1119.20px;top:296.32px;font-size:13.8px;transform:scaleX(1.0536);">5,00</div>
<div class="t b" style="left:1246.40px;top:296.32px;font-size:13.8px;transform:scaleX(1.0684);">30391</div>
<div class="t b" style="left:28.10px;top:314.79px;font-size:13.8px;transform:scaleX(1.0685);">653144</div>
<div class="t b" style="left:111.60px;top:314.79px;font-size:13.8px;transform:scaleX(1.1318);">02/02/23</div>
<div class="t b" style="left:189.10px;top:314.79px;font-size:13.8px;transform:scaleX(1.1318);">02/02/23</div>
<div class="t b" style="left:286.40px;top:314.79px;font-size:13.8px;transform:scaleX(1.0684);">55923</div>
<div class="t b" style="left:340.80px;top:314.79px;font-size:13.8px;transform:scaleX(0.8897);">C...</div>
<div class="t b" style="left:411.50px;top:314.79px;font-size:13.8px;transform:scaleX(1.0667);">2</div>
<div class="t b" style="left:433.60px;top:314.79px;font-size:13.8px;transform:scaleX(1.0043);">M...</div>
<div class="t b" style="left:470.30px;top:314.79px;font-size:13.8px;transform:scaleX(0.9634);">Recebido com Nota Fiscal/DAV ...</div>
<div class="t b" style="left:767.10px;top:314.79px;font-size:13.8px;transform:scaleX(1.0570);">40,80</div>
<div class="t b" style="left:891.20px;top:314.79px;font-size:13.8px;transform:scaleX(1.0536);">1,00</div>
<div class="t b" style="left:1015.40px;top:314.79px;font-size:13.8px;transform:scaleX(1.0476);">,80</div>
<div class="t b" style="left:1111.00px;top:314.79px;font-size:13.8px;transform:scaleX(1.0570);">40,00</div>
<div class="t b" style="left:1318.70px;top:314.79px;font-size:13.8px;transform:scaleX(1.0685);">653144</div>
<div class="t b" style="left:28.10px;top:333.26px;font-size:13.8px;transform:scaleX(1.0685);">653145</div>
<div class="t b" style="left:111.60px;top:333.26px;font-size:13.8px;transform:scaleX(1.1318);">02/02/23</div>
<div class="t b" style="left:189.10px;top:333.26px;font-size:13.8px;transform:scaleX(1.1318);">02/02/23</div>
<div class="t b" style="left:286.40px;top:333.26px;font-size:13.8px;transform:scaleX(1.0684);">55923</div>
<div class="t b" style="left:340.80px;top:333.26px;font-size:13.8px;transform:scaleX(0.8897);">C...</div>
<div class="t b" style="left:411.50px;top:333.26px;font-size:13.8px;transform:scaleX(1.0667);">6</div>
<div class="t b" style="left:433.60px;top:333.26px;font-size:13.8px;transform:scaleX(0.8897);">C...</div>
<div class="t b" style="left:470.30px;top:333.26px;font-size:13.8px;transform:scaleX(0.9634);">Recebido com Nota Fiscal/DAV ...</div>
<div class="t b" style="left:775.30px;top:333.26px;font-size:13.8px;transform:scaleX(1.0536);">6,00</div>
<div class="t b" style="left:1119.20px;top:333.26px;font-size:13.8px;transform:scaleX(1.0536);">6,00</div>
<div class="t b" style="left:1246.40px;top:333.26px;font-size:13.8px;transform:scaleX(1.0684);">30392</div>
<div class="t b" style="left:28.10px;top:351.73px;font-size:13.8px;transform:scaleX(1.0685);">653146</div>
<div class="t b" style="left:111.60px;top:351.73px;font-size:13.8px;transform:scaleX(1.1318);">02/02/23</div>
<div class="t b" style="left:189.10px;top:351.73px;font-size:13.8px;transform:scaleX(1.1318);">02/02/23</div>
<div class="t b" style="left:286.40px;top:351.73px;font-size:13.8px;transform:scaleX(1.0684);">55923</div>
<div class="t b" style="left:340.80px;top:351.73px;font-size:13.8px;transform:scaleX(0.8897);">C...</div>
<div class="t b" style="left:411.50px;top:351.73px;font-size:13.8px;transform:scaleX(1.0667);">2</div>
<div class="t b" style="left:433.60px;top:351.73px;font-size:13.8px;transform:scaleX(1.0043);">M...</div>
<div class="t b" style="left:470.30px;top:351.73px;font-size:13.8px;transform:scaleX(0.9634);">Recebido com Nota Fiscal/DAV ...</div>
<div class="t b" style="left:767.10px;top:351.73px;font-size:13.8px;transform:scaleX(1.0570);">10,00</div>
<div class="t b" style="left:1111.00px;top:351.73px;font-size:13.8px;transform:scaleX(1.0570);">10,00</div>
<div class="t b" style="left:1318.70px;top:351.73px;font-size:13.8px;transform:scaleX(1.0685);">653146</div>
<div class="t b" style="left:28.10px;top:370.20px;font-size:13.8px;transform:scaleX(1.0685);">653147</div>
<div class="t b" style="left:111.60px;top:370.20px;font-size:13.8px;transform:scaleX(1.1318);">02/02/23</div>
<div class="t b" style="left:189.10px;top:370.20px;font-size:13.8px;transform:scaleX(1.1318);">02/02/23</div>
<div class="t b" style="left:286.40px;top:370.20px;font-size:13.8px;transform:scaleX(1.0684);">55923</div>
<div class="t b" style="left:340.80px;top:370.20px;font-size:13.8px;transform:scaleX(0.8897);">C...</div>
<div class="t b" style="left:411.50px;top:370.20px;font-size:13.8px;transform:scaleX(1.0667);">2</div>
<div class="t b" style="left:433.60px;top:370.20px;font-size:13.8px;transform:scaleX(1.0043);">M...</div>
<div class="t b" style="left:470.30px;top:370.20px;font-size:13.8px;transform:scaleX(0.9634);">Recebido com Nota Fiscal/DAV ...</div>
<div class="t b" style="left:775.30px;top:370.20px;font-size:13.8px;transform:scaleX(1.0536);">8,50</div>
<div class="t b" style="left:1119.20px;top:370.20px;font-size:13.8px;transform:scaleX(1.0536);">8,50</div>
<div class="t b" style="left:1246.40px;top:370.20px;font-size:13.8px;transform:scaleX(1.0684);">30394</div>
<div class="t b" style="left:28.10px;top:388.67px;font-size:13.8px;transform:scaleX(1.0685);">653149</div>
<div class="t b" style="left:111.60px;top:388.67px;font-size:13.8px;transform:scaleX(1.1318);">02/02/23</div>
<div class="t b" style="left:189.10px;top:388.67px;font-size:13.8px;transform:scaleX(1.1318);">02/02/23</div>
<div class="t b" style="left:286.40px;top:388.67px;font-size:13.8px;transform:scaleX(1.0684);">55923</div>
<div class="t b" style="left:340.80px;top:388.67px;font-size:13.8px;transform:scaleX(0.8897);">C...</div>
<div class="t b" style="left:411.50px;top:388.67px;font-size:13.8px;transform:scaleX(1.0667);">3</div>
<div class="t b" style="left:433.60px;top:388.67px;font-size:13.8px;transform:scaleX(1.0043);">M...</div>
<div class="t b" style="left:470.30px;top:388.67px;font-size:13.8px;transform:scaleX(0.9634);">Recebido com Nota Fiscal/DAV ...</div>
<div class="t b" style="left:775.30px;top:388.67px;font-size:13.8px;transform:scaleX(1.0536);">3,90</div>
<div class="t b" style="left:1119.20px;top:388.67px;font-size:13.8px;transform:scaleX(1.0536);">3,90</div>
<div class="t b" style="left:1246.40px;top:388.67px;font-size:13.8px;transform:scaleX(1.0684);">30393</div>
<div class="t b" style="left:28.10px;top:407.14px;font-size:13.8px;transform:scaleX(1.0685);">653150</div>
<div class="t b" style="left:111.60px;top:407.14px;font-size:13.8px;transform:scaleX(1.1318);">02/02/23</div>
<div class="t b" style="left:189.10px;top:407.14px;font-size:13.8px;transform:scaleX(1.1318);">02/02/23</div>
<div class="t b" style="left:286.40px;top:407.14px;font-size:13.8px;transform:scaleX(1.0684);">55923</div>
<div class="t b" style="left:340.80px;top:407.14px;font-size:13.8px;transform:scaleX(0.8897);">C...</div>
<div class="t b" style="left:411.50px;top:407.14px;font-size:13.8px;transform:scaleX(1.0667);">2</div>
<div class="t b" style="left:433.60px;top:407.14px;font-size:13.8px;transform:scaleX(1.0043);">M...</div>
<div class="t b" style="left:470.30px;top:407.14px;font-size:13.8px;transform:scaleX(0.9634);">Recebido com Nota Fiscal/DAV ...</div>
<div class="t b" style="left:767.10px;top:407.14px;font-size:13.8px;transform:scaleX(1.0570);">68,40</div>
<div class="t b" style="left:1015.40px;top:407.14px;font-size:13.8px;transform:scaleX(1.0476);">,40</div>
<div class="t b" style="left:1111.00px;top:407.14px;font-size:13.8px;transform:scaleX(1.0570);">68,00</div>
<div class="t b" style="left:1246.40px;top:407.14px;font-size:13.8px;transform:scaleX(1.0684);">30395</div>
<div class="t b" style="left:28.10px;top:425.61px;font-size:13.8px;transform:scaleX(1.0685);">653151</div>
<div class="t b" style="left:111.60px;top:425.61px;font-size:13.8px;transform:scaleX(1.1318);">02/02/23</div>
<div class="t b" style="left:189.10px;top:425.61px;font-size:13.8px;transform:scaleX(1.1318);">02/02/23</div>
<div class="t b" style="left:286.40px;top:425.61px;font-size:13.8px;transform:scaleX(1.0684);">55923</div>
<div class="t b" style="left:340.80px;top:425.61px;font-size:13.8px;transform:scaleX(0.8897);">C...</div>
<div class="t b" style="left:411.50px;top:425.61px;font-size:13.8px;transform:scaleX(1.0667);">8</div>
<div class="t b" style="left:433.60px;top:425.61px;font-size:13.8px;transform:scaleX(0.8694);">E...</div>
<div class="t b" style="left:470.30px;top:425.61px;font-size:13.8px;transform:scaleX(0.9634);">Recebido com Nota Fiscal/DAV ...</div>
<div class="t b" style="left:758.90px;top:425.61px;font-size:13.8px;transform:scaleX(1.0592);">126,00</div>
<div class="t b" style="left:1102.80px;top:425.61px;font-size:13.8px;transform:scaleX(1.0592);">126,00</div>
<div class="t b" style="left:1318.70px;top:425.61px;font-size:13.8px;transform:scaleX(1.0685);">653151</div>
<div class="t b" style="left:28.10px;top:444.08px;font-size:13.8px;transform:scaleX(1.0685);">653152</div>
<div class="t b" style="left:111.60px;top:444.08px;font-size:13.8px;transform:scaleX(1.1318);">02/02/23</div>
<div class="t b" style="left:189.10px;top:444.08px;font-size:13.8px;transform:scaleX(1.1318);">02/02/23</div>
<div class="t b" style="left:286.40px;top:444.08px;font-size:13.8px;transform:scaleX(1.0684);">55923</div>
<div class="t b" style="left:340.80px;top:444.08px;font-size:13.8px;transform:scaleX(0.8897);">C...</div>
<div class="t b" style="left:411.50px;top:444.08px;font-size:13.8px;transform:scaleX(1.0667);">6</div>
<div class="t b" style="left:433.60px;top:444.08px;font-size:13.8px;transform:scaleX(0.8897);">C...</div>
<div class="t b" style="left:470.30px;top:444.08px;font-size:13.8px;transform:scaleX(0.9634);">Recebido com Nota Fiscal/DAV ...</div>
<div class="t b" style="left:767.10px;top:444.08px;font-size:13.8px;transform:scaleX(1.0570);">51,00</div>
<div class="t b" style="left:1111.00px;top:444.08px;font-size:13.8px;transform:scaleX(1.0570);">51,00</div>
<div class="t b" style="left:1246.40px;top:444.08px;font-size:13.8px;transform:scaleX(1.0684);">30396</div>
<div class="t b" style="left:28.10px;top:462.55px;font-size:13.8px;transform:scaleX(1.0685);">653153</div>
<div class="t b" style="left:111.60px;top:462.55px;font-size:13.8px;transform:scaleX(1.1318);">02/02/23</div>
<div class="t b" style="left:189.10px;top:462.55px;font-size:13.8px;transform:scaleX(1.1318);">02/02/23</div>
<div class="t b" style="left:286.40px;top:462.55px;font-size:13.8px;transform:scaleX(1.0684);">55923</div>
<div class="t b" style="left:340.80px;top:462.55px;font-size:13.8px;transform:scaleX(0.8897);">C...</div>
<div class="t b" style="left:411.50px;top:462.55px;font-size:13.8px;transform:scaleX(1.0667);">3</div>
<div class="t b" style="left:433.60px;top:462.55px;font-size:13.8px;transform:scaleX(1.0043);">M...</div>
<div class="t b" style="left:470.30px;top:462.55px;font-size:13.8px;transform:scaleX(0.9634);">Recebido com Nota Fiscal/DAV ...</div>
<div class="t b" style="left:775.30px;top:462.55px;font-size:13.8px;transform:scaleX(1.0536);">2,25</div>
<div class="t b" style="left:883.00px;top:462.55px;font-size:13.8px;transform:scaleX(1.0570);">11,00</div>
<div class="t b" style="left:1015.40px;top:462.55px;font-size:13.8px;transform:scaleX(1.0476);">,25</div>
<div class="t b" style="left:1119.20px;top:462.55px;font-size:13.8px;transform:scaleX(1.0536);">2,00</div>
<div class="t b" style="left:1318.70px;top:462.55px;font-size:13.8px;transform:scaleX(1.0685);">653153</div>
<div class="t b" style="left:28.10px;top:481.02px;font-size:13.8px;transform:scaleX(1.0685);">653154</div>
<div class="t b" style="left:111.60px;top:481.02px;font-size:13.8px;transform:scaleX(1.1318);">02/02/23</div>
<div class="t b" style="left:189.10px;top:481.02px;font-size:13.8px;transform:scaleX(1.1318);">02/02/23</div>
<div class="t b" style="left:286.40px;top:481.02px;font-size:13.8px;transform:scaleX(1.0684);">55923</div>
<div class="t b" style="left:340.80px;top:481.02px;font-size:13.8px;transform:scaleX(0.8897);">C...</div>
<div class="t b" style="left:411.50px;top:481.02px;font-size:13.8px;transform:scaleX(1.0667);">2</div>
<div class="t b" style="left:433.60px;top:481.02px;font-size:13.8px;transform:scaleX(1.0043);">M...</div>
<div class="t b" style="left:470.30px;top:481.02px;font-size:13.8px;transform:scaleX(0.9634);">Recebido com Nota Fiscal/DAV ...</div>
<div class="t b" style="left:775.30px;top:481.02px;font-size:13.8px;transform:scaleX(1.0536);">4,37</div>
<div class="t b" style="left:891.20px;top:481.02px;font-size:13.8px;transform:scaleX(1.0536);">1,00</div>
<div class="t b" style="left:1015.40px;top:481.02px;font-size:13.8px;transform:scaleX(1.0476);">,07</div>
<div class="t b" style="left:1119.20px;top:481.02px;font-size:13.8px;transform:scaleX(1.0536);">4,30</div>
<div class="t b" style="left:1318.70px;top:481.02px;font-size:13.8px;transform:scaleX(1.0685);">653154</div>
<div class="t b" style="left:28.10px;top:499.49px;font-size:13.8px;transform:scaleX(1.0685);">653155</div>
<div class="t b" style="left:111.60px;top:499.49px;font-size:13.8px;transform:scaleX(1.1318);">02/02/23</div>
<div class="t b" style="left:189.10px;top:499.49px;font-size:13.8px;transform:scaleX(1.1318);">02/02/23</div>
<div class="t b" style="left:286.40px;top:499.49px;font-size:13.8px;transform:scaleX(1.0684);">55923</div>
<div class="t b" style="left:340.80px;top:499.49px;font-size:13.8px;transform:scaleX(0.8897);">C...</div>
<div class="t b" style="left:411.50px;top:499.49px;font-size:13.8px;transform:scaleX(1.0667);">3</div>
<div class="t b" style="left:433.60px;top:499.49px;font-size:13.8px;transform:scaleX(1.0043);">M...</div>
<div class="t b" style="left:470.30px;top:499.49px;font-size:13.8px;transform:scaleX(0.9634);">Recebido com Nota Fiscal/DAV ...</div>
<div class="t b" style="left:767.10px;top:499.49px;font-size:13.8px;transform:scaleX(1.0570);">37,36</div>
<div class="t b" style="left:891.20px;top:499.49px;font-size:13.8px;transform:scaleX(1.0536);">8,00</div>
<div class="t b" style="left:1007.20px;top:499.49px;font-size:13.8px;transform:scaleX(1.0536);">3,36</div>
<div class="t b" style="left:1111.00px;top:499.49px;font-size:13.8px;transform:scaleX(1.0570);">34,00</div>
<div class="t b" style="left:1318.70px;top:499.49px;font-size:13.8px;transform:scaleX(1.0685);">653155</div>
<div class="t b" style="left:28.10px;top:517.96px;font-size:13.8px;transform:scaleX(1.0685);">653156</div>
<div class="t b" style="left:111.60px;top:517.96px;font-size:13.8px;transform:scaleX(1.1318);">02/02/23</div>
<div class="t b" style="left:189.10px;top:517.96px;font-size:13.8px;transform:scaleX(1.1318);">02/02/23</div>
<div class="t b" style="left:286.40px;top:517.96px;font-size:13.8px;transform:scaleX(1.0684);">55923</div>
<div class="t b" style="left:340.80px;top:517.96px;font-size:13.8px;transform:scaleX(0.8897);">C...</div>
<div class="t b" style="left:411.50px;top:517.96px;font-size:13.8px;transform:scaleX(1.0667);">2</div>
<div class="t b" style="left:433.60px;top:517.96px;font-size:13.8px;transform:scaleX(1.0043);">M...</div>
<div class="t b" style="left:470.30px;top:517.96px;font-size:13.8px;transform:scaleX(0.9634);">Recebido com Nota Fiscal/DAV ...</div>
<div class="t b" style="left:767.10px;top:517.96px;font-size:13.8px;transform:scaleX(1.0570);">37,00</div>
<div class="t b" style="left:1111.00px;top:517.96px;font-size:13.8px;transform:scaleX(1.0570);">37,00</div>
<div class="t b" style="left:1246.40px;top:517.96px;font-size:13.8px;transform:scaleX(1.0684);">30398</div>
<div class="t b" style="left:28.10px;top:536.43px;font-size:13.8px;transform:scaleX(1.0685);">653157</div>
<div class="t b" style="left:111.60px;top:536.43px;font-size:13.8px;transform:scaleX(1.1318);">02/02/23</div>
<div class="t b" style="left:189.10px;top:536.43px;font-size:13.8px;transform:scaleX(1.1318);">02/02/23</div>
<div class="t b" style="left:286.40px;top:536.43px;font-size:13.8px;transform:scaleX(1.0684);">55923</div>
<div class="t b" style="left:340.80px;top:536.43px;font-size:13.8px;transform:scaleX(0.8897);">C...</div>
<div class="t b" style="left:411.50px;top:536.43px;font-size:13.8px;transform:scaleX(1.0667);">6</div>
<div class="t b" style="left:433.60px;top:536.43px;font-size:13.8px;transform:scaleX(0.8897);">C...</div>
<div class="t b" style="left:470.30px;top:536.43px;font-size:13.8px;transform:scaleX(0.9634);">Recebido com Nota Fiscal/DAV ...</div>
<div class="t b" style="left:767.10px;top:536.43px;font-size:13.8px;transform:scaleX(1.0570);">20,00</div>
<div class="t b" style="left:1111.00px;top:536.43px;font-size:13.8px;transform:scaleX(1.0570);">20,00</div>
<div class="t b" style="left:1246.40px;top:536.43px;font-size:13.8px;transform:scaleX(1.0684);">30397</div>
<div class="t b" style="left:28.10px;top:554.90px;font-size:13.8px;transform:scaleX(1.0685);">653158</div>
<div class="t b" style="left:111.60px;top:554.90px;font-size:13.8px;transform:scaleX(1.1318);">02/02/23</div>
<div class="t b" style="left:189.10px;top:554.90px;font-size:13.8px;transform:scaleX(1.1318);">02/02/23</div>
<div class="t b" style="left:286.40px;top:554.90px;font-size:13.8px;transform:scaleX(1.0684);">55923</div>
<div class="t b" style="left:340.80px;top:554.90px;font-size:13.8px;transform:scaleX(0.8897);">C...</div>
<div class="t b" style="left:411.50px;top:554.90px;font-size:13.8px;transform:scaleX(1.0667);">8</div>
<div class="t b" style="left:433.60px;top:554.90px;font-size:13.8px;transform:scaleX(0.8694);">E...</div>
<div class="t b" style="left:470.30px;top:554.90px;font-size:13.8px;transform:scaleX(0.9634);">Recebido com Nota Fiscal/DAV ...</div>
<div class="t b" style="left:758.90px;top:554.90px;font-size:13.8px;transform:scaleX(1.0592);">704,80</div>
<div class="t b" style="left:1007.20px;top:554.90px;font-size:13.8px;transform:scaleX(1.0536);">4,80</div>
<div class="t b" style="left:1102.80px;top:554.90px;font-size:13.8px;transform:scaleX(1.0592);">700,00</div>
<div class="t b" style="left:1246.40px;top:554.90px;font-size:13.8px;transform:scaleX(1.0684);">30399</div>
<div class="t b" style="left:28.10px;top:573.37px;font-size:13.8px;transform:scaleX(1.0685);">653159</div>
<div class="t b" style="left:111.60px;top:573.37px;font-size:13.8px;transform:scaleX(1.1318);">02/02/23</div>
<div class="t b" style="left:189.10px;top:573.37px;font-size:13.8px;transform:scaleX(1.1318);">15/02/23</div>
<div class="t b" style="left:286.40px;top:573.37px;font-size:13.8px;transform:scaleX(1.0684);">62842</div>
<div class="t b" style="left:340.80px;top:573.37px;font-size:13.8px;transform:scaleX(1.0043);">M...</div>
<div class="t b" style="left:411.50px;top:573.37px;font-size:13.8px;transform:scaleX(1.0667);">2</div>
<div class="t b" style="left:433.60px;top:573.37px;font-size:13.8px;transform:scaleX(1.0043);">M...</div>
<div class="t b" style="left:470.30px;top:573.37px;font-size:13.8px;transform:scaleX(0.9634);">Recebido com Nota Fiscal/DAV ...</div>
<div class="t b" style="left:767.10px;top:573.37px;font-size:13.8px;transform:scaleX(1.0570);">56,00</div>
<div class="t b" style="left:1111.00px;top:573.37px;font-size:13.8px;transform:scaleX(1.0570);">56,00</div>
<div class="t b" style="left:1168.40px;top:573.37px;font-size:13.8px;transform:scaleX(1.0684);">52191</div>
<div class="t b" style="left:470.70px;top:591.92px;font-size:13.8px;transform:scaleX(0.9625);">Total...</div>
<div class="t b" style="left:718.70px;top:591.92px;font-size:13.8px;transform:scaleX(1.0538);">4.256.339,15</div>
<div class="t b" style="left:970.30px;top:591.92px;font-size:13.8px;transform:scaleX(1.0555);">22.044,38</div>
<div class="t b" style="left:1062.20px;top:591.92px;font-size:13.8px;transform:scaleX(1.0538);">4.234.294,77</div>
<div style="left:96.00px;top:85.20px;width:2.6px;height:5.4px;background:#fff;border-radius:1.3px"></div>
<div style="left:128.40px;top:85.20px;width:2.6px;height:5.4px;background:#fff;border-radius:1.3px"></div>
<div style="left:96.00px;top:120.00px;width:2.6px;height:5.4px;background:#fff;border-radius:1.3px"></div>
<div style="left:128.40px;top:120.00px;width:2.6px;height:5.4px;background:#fff;border-radius:1.3px"></div>
<div style="left:1211.3px;top:71.8px;width:101.8px;height:33.0px;border:4.15px solid #ff0000"></div>
<div style="left:21.2px;top:263.9px;width:1389.6px;height:319.4px;border:4.1px solid #ff0000"></div>
<div style="left:461.2px;top:587.4px;width:685.9px;height:19.4px;border:4.2px solid #ff0000"></div>
</div></body></html>
